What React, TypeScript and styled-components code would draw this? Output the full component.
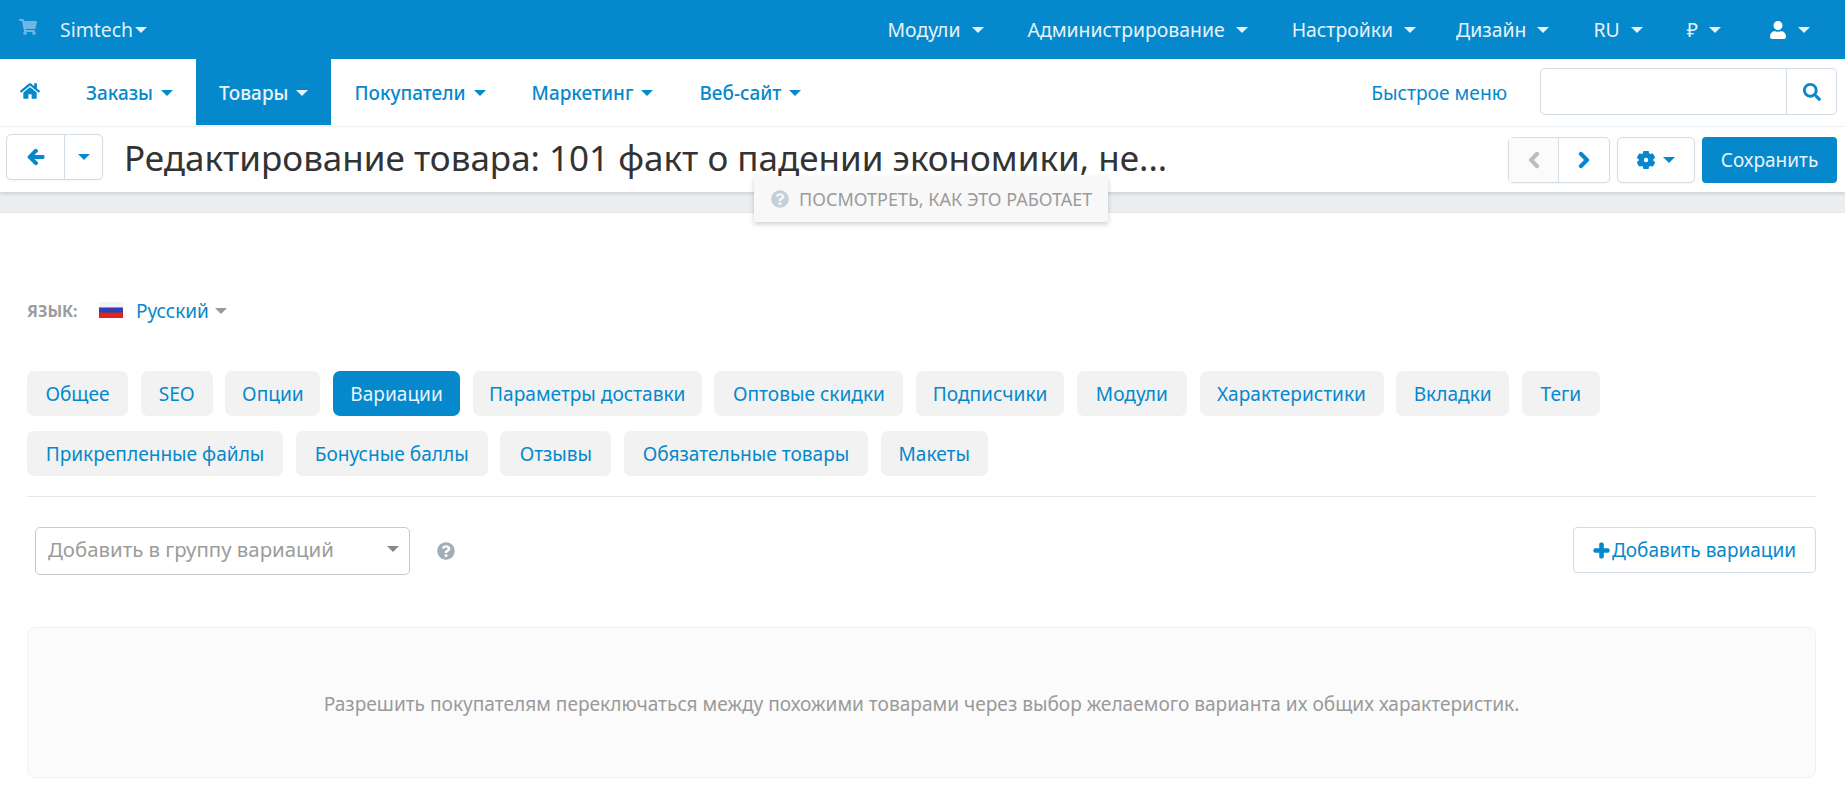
import React from 'react';
import { FaArrowLeft, FaChevronLeft, FaChevronRight, FaCog, FaHome, FaPlus, FaQuestionCircle, FaSearch, FaShoppingCart, FaUser } from 'react-icons/fa';
import styled, { createGlobalStyle } from 'styled-components';

const BLUE = '#0588cc';
const BORDER = '#d3dde6';
const FONT = '"Noto Sans", "Open Sans", sans-serif';

const GlobalStyle = createGlobalStyle`
  html, body {
    margin: 0;
    padding: 0;
    background: #fff;
    font-family: ${FONT};
  }
  * {
    box-sizing: border-box;
  }
`;

const Page = styled.div`
  position: relative;
  width: 1845px;
  height: 810px;
  overflow: hidden;
`;

const Caret = styled.i<{ $color?: string; $size?: number }>`
  display: inline-block;
  width: 0;
  height: 0;
  border-left: ${p => p.$size ?? 6.5}px solid transparent;
  border-right: ${p => p.$size ?? 6.5}px solid transparent;
  border-top: ${p => p.$size ?? 6.5}px solid ${p => p.$color ?? 'currentColor'};
`;

const TopBar = styled.header`
  height: 59px;
  background: ${BLUE};
  color: #e6f3fa;
  display: flex;
  align-items: center;
  justify-content: space-between;
  padding: 0 35px 0 19px;
  font-size: 19.4px;
`;

const Brand = styled.div`
  display: flex;
  align-items: center;
  color: #dff0f9;
  svg {
    color: #6cb8e2;
    font-size: 18px;
    margin: -5px 23px 0 0;
  }
  i {
    margin-left: 2px;
  }
`;

const TopMenu = styled.nav`
  display: flex;
  align-items: center;
`;

const TopItem = styled.span<{ $after?: number }>`
  display: flex;
  align-items: center;
  gap: 11px;
  margin-right: ${p => p.$after ?? 44}px;
  svg {
    font-size: 18px;
    color: #fff;
  }
`;

const MainNav = styled.nav`
  height: 68px;
  display: flex;
  align-items: flex-start;
  padding: 0 8px 0 0;
  background: #fff;
  border-bottom: 1px solid #f1f2f3;
  box-shadow: 0 1px 2px rgba(0, 0, 0, 0.03);
  position: relative;
`;

const NavLink = styled.a<{ $active?: boolean }>`
  height: 66px;
  display: flex;
  align-items: center;
  gap: 8px;
  padding: 2px 23px 0;
  font-size: 18.95px;
  font-weight: 500;
  color: ${p => (p.$active ? '#e8f4fb' : BLUE)};
  background: ${p => (p.$active ? BLUE : 'transparent')};
  svg {
    font-size: 20px;
    margin-top: -3px;
  }
`;

const HomeLink = styled(NavLink)`
  padding: 0 23px 0 20px;
`;

const NavSpacer = styled.div`
  flex: 1;
`;

const QuickMenu = styled.a`
  height: 66px;
  display: flex;
  align-items: center;
  margin-right: 33px;
  font-size: 19.2px;
  color: ${BLUE};
`;

const SearchBox = styled.div`
  display: flex;
  width: 297px;
  height: 47px;
  margin-top: 9px;
  border: 1px solid ${BORDER};
  border-radius: 5px;
  background: #fff;
`;

const SearchInput = styled.div`
  flex: 1;
  border-right: 1px solid ${BORDER};
`;

const SearchButton = styled.div`
  width: 49px;
  display: flex;
  align-items: center;
  justify-content: center;
  color: ${BLUE};
  font-size: 18px;
`;

const Toolbar = styled.div`
  height: 65px;
  display: flex;
  align-items: center;
  padding: 0 8px 0 6px;
  background: #fff;
  box-shadow: 0 2px 3px rgba(0, 0, 0, 0.12);
  position: relative;
`;

const ButtonGroup = styled.div<{ $width: number }>`
  display: flex;
  width: ${p => p.$width}px;
  height: 46px;
  border: 1px solid ${BORDER};
  border-radius: 5px;
  background: #fff;
  box-shadow: 0 1px 2px rgba(0, 0, 0, 0.05);
`;

const BackGroup = styled(ButtonGroup)`
  margin-top: -5px;
`;

const GroupCell = styled.div<{ $muted?: boolean; $basis?: number }>`
  flex: ${p => (p.$basis ? `0 0 ${p.$basis}px` : 1)};
  display: flex;
  align-items: center;
  justify-content: center;
  gap: 8px;
  color: ${p => (p.$muted ? '#bdbdbd' : BLUE)};
  background: ${p => (p.$muted ? '#fbfbfb' : 'transparent')};
  font-size: 18px;
  & + & {
    border-left: 1px solid ${BORDER};
  }
  svg {
    stroke: currentColor;
    stroke-width: 36;
  }
`;

const Title = styled.h1`
  flex: 1;
  margin: 0 0 4px 21px;
  font-size: 35px;
  font-weight: 400;
  color: #333;
  white-space: nowrap;
`;

const ToolbarRight = styled.div`
  display: flex;
  align-items: center;
  gap: 7px;
`;

const SaveButton = styled.button`
  width: 135px;
  height: 46px;
  border: 0;
  border-radius: 4px;
  background: ${BLUE};
  color: #e6f3fa;
  font: 19px ${FONT};
`;

const Band = styled.div`
  height: 21px;
  background: #ebeef1;
  border-bottom: 1px solid #e6e8ea;
`;

const HowItWorks = styled.div`
  position: absolute;
  left: 754px;
  top: 177px;
  width: 354px;
  height: 45px;
  display: flex;
  align-items: center;
  gap: 10px;
  padding: 0 0 2px 17px;
  background: #f8f8f8;
  box-shadow: 0 2px 5px rgba(0, 0, 0, 0.2);
  color: #9b9b9b;
  font-size: 18px;
  white-space: nowrap;
  svg {
    color: #c3cfda;
    font-size: 18px;
  }
`;

const Content = styled.main`
  padding: 0 29px 0 27px;
`;

const LangRow = styled.div`
  height: 28px;
  margin: 84px 0 46px;
  display: flex;
  align-items: center;
`;

const LangLabel = styled.span`
  width: 72px;
  font-size: 16px;
  font-weight: 700;
  color: #9c9c9c;
`;

const Flag = styled.span`
  width: 24px;
  height: 16px;
  margin: -3px 13px 0 0;
  background: linear-gradient(#f4f4f6 0 30%, #2e3fb8 38% 62%, #e2231a 70% 100%);
`;

const LangValue = styled.a`
  font-size: 19px;
  color: ${BLUE};
  margin-right: 6px;
`;

const Tabs = styled.div`
  display: flex;
  flex-wrap: wrap;
  gap: 15px 12.7px;
  padding-bottom: 20px;
  border-bottom: 1px solid #e3e8ee;
`;

const Tab = styled.a<{ $active?: boolean; $width: number }>`
  width: ${p => p.$width}px;
  height: 45px;
  display: flex;
  align-items: center;
  justify-content: center;
  border-radius: 7px;
  font-size: 19.1px;
  color: ${p => (p.$active ? '#e8f4fb' : BLUE)};
  background: ${p => (p.$active ? BLUE : '#f2f2f2')};
  white-space: nowrap;
`;

const ActionRow = styled.div`
  display: flex;
  align-items: flex-start;
  margin: 30px 0 52px 8px;
`;

const GroupSelect = styled.div`
  width: 375px;
  height: 48px;
  display: flex;
  align-items: center;
  justify-content: space-between;
  padding: 0 10px 4px 12px;
  border: 1px solid #c9c9c9;
  border-radius: 5px;
  color: #9c9c9c;
  font-size: 20.4px;
  i {
    margin-top: -1px;
  }
`;

const HelpIcon = styled.span`
  display: flex;
  margin: 15px 0 0 27px;
  color: #a0aeb9;
  font-size: 18px;
`;

const AddButton = styled.a`
  margin-left: auto;
  height: 46px;
  width: 243px;
  display: flex;
  align-items: center;
  justify-content: center;
  gap: 2px;
  border: 1px solid ${BORDER};
  border-radius: 4px;
  color: ${BLUE};
  font-size: 19px;
  svg {
    font-size: 17px;
    stroke: currentColor;
    stroke-width: 40;
  }
`;

const EmptyPanel = styled.div`
  height: 151px;
  display: flex;
  align-items: center;
  justify-content: center;
  padding-top: 2px;
  background: #fbfbfb;
  border: 1px solid #f1f1f1;
  border-radius: 8px;
  color: #9a9a9a;
  font-size: 19.1px;
`;

const topItems = [
  { label: 'Модули' },
  { label: 'Администрирование' },
  { label: 'Настройки', after: 40 },
  { label: 'Дизайн' },
  { label: 'RU' },
  { label: '₽', after: 48 },
];
const navItems = ['Заказы', 'Товары', 'Покупатели', 'Маркетинг', 'Веб-сайт'];
const tabItems = [
  { label: 'Общее', width: 101 },
  { label: 'SEO', width: 72 },
  { label: 'Опции', width: 95 },
  { label: 'Вариации', width: 127 },
  { label: 'Параметры доставки', width: 229 },
  { label: 'Оптовые скидки', width: 189 },
  { label: 'Подписчики', width: 148 },
  { label: 'Модули', width: 110 },
  { label: 'Характеристики', width: 184 },
  { label: 'Вкладки', width: 113 },
  { label: 'Теги', width: 78 },
  { label: 'Прикрепленные файлы', width: 256 },
  { label: 'Бонусные баллы', width: 192 },
  { label: 'Отзывы', width: 111 },
  { label: 'Обязательные товары', width: 244 },
  { label: 'Макеты', width: 107 },
];

const App: React.FC = () => (
  <Page>
    <GlobalStyle />
    <TopBar>
      <Brand>
        <FaShoppingCart />
        Simtech
        <Caret />
      </Brand>
      <TopMenu>
        {topItems.map(item => (
          <TopItem key={item.label} $after={item.after}>
            {item.label}
            <Caret />
          </TopItem>
        ))}
        <TopItem $after={0}>
          <FaUser />
          <Caret />
        </TopItem>
      </TopMenu>
    </TopBar>
    <MainNav>
      <HomeLink>
        <FaHome />
      </HomeLink>
      {navItems.map(item => (
        <NavLink key={item} $active={item === 'Товары'}>
          {item}
          <Caret />
        </NavLink>
      ))}
      <NavSpacer />
      <QuickMenu>Быстрое меню</QuickMenu>
      <SearchBox>
        <SearchInput />
        <SearchButton>
          <FaSearch />
        </SearchButton>
      </SearchBox>
    </MainNav>
    <Toolbar>
      <BackGroup $width={97}>
        <GroupCell>
          <FaArrowLeft />
        </GroupCell>
        <GroupCell $basis={38}>
          <Caret />
        </GroupCell>
      </BackGroup>
      <Title>Редактирование товара: 101 факт о падении экономики, не...</Title>
      <ToolbarRight>
        <ButtonGroup $width={102}>
          <GroupCell $muted $basis={49}>
            <FaChevronLeft />
          </GroupCell>
          <GroupCell>
            <FaChevronRight />
          </GroupCell>
        </ButtonGroup>
        <ButtonGroup $width={78}>
          <GroupCell>
            <FaCog />
            <Caret />
          </GroupCell>
        </ButtonGroup>
        <SaveButton>Сохранить</SaveButton>
      </ToolbarRight>
    </Toolbar>
    <Band />
    <HowItWorks>
      <FaQuestionCircle />
      ПОСМОТРЕТЬ, КАК ЭТО РАБОТАЕТ
    </HowItWorks>
    <Content>
      <LangRow>
        <LangLabel>ЯЗЫК:</LangLabel>
        <Flag />
        <LangValue>Русский</LangValue>
        <Caret $color="#999" />
      </LangRow>
      <Tabs>
        {tabItems.map(item => (
          <Tab key={item.label} $width={item.width} $active={item.label === 'Вариации'}>
            {item.label}
          </Tab>
        ))}
      </Tabs>
      <ActionRow>
        <GroupSelect>
          Добавить в группу вариаций
          <Caret $color="#888" />
        </GroupSelect>
        <HelpIcon>
          <FaQuestionCircle />
        </HelpIcon>
        <AddButton>
          <FaPlus />
          Добавить вариации
        </AddButton>
      </ActionRow>
      <EmptyPanel>Разрешить покупателям переключаться между похожими товарами через выбор желаемого варианта их общих характеристик.</EmptyPanel>
    </Content>
  </Page>
);

export default App;
